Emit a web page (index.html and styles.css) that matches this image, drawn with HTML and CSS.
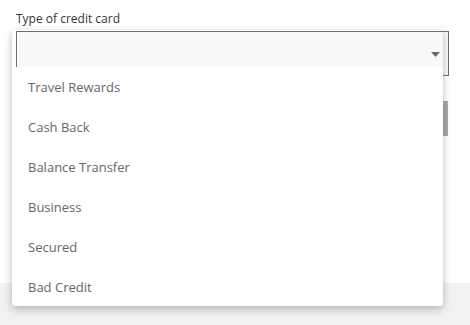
FILE: index.html
```html
<!DOCTYPE html>
<html>
<head>
<meta charset="utf-8">
<link rel="stylesheet" href="styles.css">
</head>
<body>
<div class="page">
  <div class="field">
    <label class="label">Type of credit card</label>
    <div class="select">
      <svg class="arrow" width="9" height="5" viewBox="0 0 9 5"><path d="M0 0h9L4.5 5z" fill="#6b6b6b"/></svg>
    </div>
  </div>
  <div class="scroll-row"><div class="thumb"></div></div>
  <div class="footer"></div>
</div>
<div class="menu">
  <ul class="menu-list">
    <li>Travel Rewards</li>
    <li>Cash Back</li>
    <li>Balance Transfer</li>
    <li>Business</li>
    <li>Secured</li>
    <li>Bad Credit</li>
  </ul>
</div>
</body>
</html>
```
FILE: styles.css
```css
html, body {
  margin: 0;
  padding: 0;
  background: #fff;
}
body {
  font-family: "Open Sans", "Liberation Sans", sans-serif;
  width: 470px;
  height: 325px;
  overflow: hidden;
  position: relative;
}
.page {
  display: flex;
  flex-direction: column;
  height: 325px;
}
.field {
  display: flex;
  flex-direction: column;
  padding: 10px 21px 0 16px;
}
.label {
  font-size: 12px;
  color: #333;
  line-height: 17px;
  margin-bottom: 4px;
}
.select {
  height: 43px;
  border: 1px solid #6f6f6f;
  background: #f9f9f9;
  display: flex;
  align-items: center;
  justify-content: flex-end;
  padding-right: 8px;
}
.arrow {
  display: block;
  margin-top: 2px;
}
.scroll-row {
  display: flex;
  justify-content: flex-end;
  padding-right: 22px;
  margin-top: 25px;
}
.thumb {
  width: 5px;
  height: 35px;
  background: #acacac;
}
.footer {
  margin-top: auto;
  height: 42px;
  background: #f2f2f2;
}
.menu {
  position: absolute;
  left: 12px;
  top: 30px;
  width: 431px;
  height: 276px;
  border-radius: 4px;
  background: linear-gradient(to bottom, transparent 37px, #fff 37px);
  box-shadow: 0 4px 10px rgba(0,0,0,0.22), 0 0 5px rgba(0,0,0,0.06);
}
.menu-list {
  list-style: none;
  margin: 0;
  padding: 37px 0 0;
}
.menu-list li {
  height: 40px;
  display: flex;
  align-items: center;
  padding-left: 16px;
  font-size: 13px;
  color: #666;
}
```
